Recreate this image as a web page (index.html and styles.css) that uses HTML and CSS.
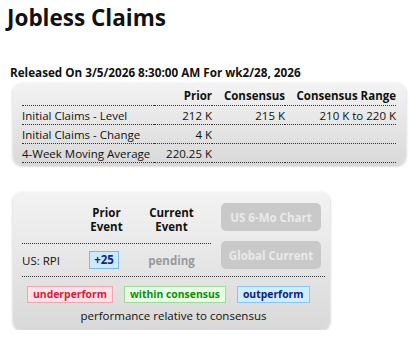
FILE: index.html
```html
<!DOCTYPE html>
<html>
<head>
<meta charset="utf-8">
<link rel="stylesheet" href="styles.css">
</head>
<body>
<h1 class="title">Jobless Claims</h1>
<div class="released">Released On 3/5/2026 8:30:00 AM For wk2/28, 2026</div>
<div class="box data-box">
  <table class="data">
    <thead>
      <tr><th class="lbl"></th><th>Prior</th><th>Consensus</th><th>Consensus Range</th></tr>
    </thead>
    <tbody>
      <tr><td class="lbl">Initial Claims - Level</td><td>212 K</td><td>215 K</td><td>210 K to 220 K</td></tr>
      <tr><td class="lbl">Initial Claims - Change</td><td>4 K</td><td></td><td></td></tr>
      <tr><td class="lbl">4-Week Moving Average</td><td>220.25 K</td><td></td><td></td></tr>
    </tbody>
  </table>
</div>
<div class="box perf-box">
  <div class="perf-top">
    <div class="perf-table">
      <div class="perf-head">
        <div class="ph-lbl"></div>
        <div class="ph-col">Prior<br>Event</div>
        <div class="ph-col">Current<br>Event</div>
      </div>
      <div class="perf-row">
        <div class="ph-lbl">US: RPI</div>
        <div class="ph-col"><span class="badge-blue">+25</span></div>
        <div class="ph-col pending">pending</div>
      </div>
    </div>
    <div class="buttons">
      <div class="btn">US 6-Mo Chart</div>
      <div class="btn">Global Current</div>
    </div>
  </div>
  <div class="legend">
    <span class="tag under">underperform</span>
    <span class="tag within">within consensus</span>
    <span class="tag out">outperform</span>
  </div>
  <div class="caption">performance relative to consensus</div>
</div>
</body>
</html>
```
FILE: styles.css
```css
body {
  margin: 0;
  padding: 0;
  font-family: "Open Sans", "Liberation Sans", sans-serif;
  color: #111;
  background: #fff;
}
.title {
  margin: 0;
  padding: 5px 0 0 7px;
  font-size: 22.5px;
  font-weight: 700;
  line-height: 26px;
}
.released {
  margin: 34px 0 0 10px;
  font-size: 11.7px;
  font-weight: 700;
  line-height: 14px;
}
.box {
  border-radius: 9px;
  background: linear-gradient(#f3f3f3, #d9d9d9);
  box-shadow: 0 1px 3px rgba(0,0,0,0.25);
}
.data-box {
  margin: 4px 0 0 13px;
  width: 393px;
  padding: 4px 0 2px 0;
}
.data {
  border-collapse: separate;
  border-spacing: 0;
  margin-left: 9px;
  font-size: 11.5px;
}
.data th {
  font-weight: 700;
  text-align: right;
  padding: 2px 0 3px 0;
  border-bottom: 1px dotted #333;
  line-height: 13px;
}
.data td {
  text-align: right;
  padding: 3px 0 2px 0;
  border-bottom: 1px dotted #333;
  line-height: 13px;
}
.data .lbl { text-align: left; width: 132px; }
.data th:nth-child(2), .data td:nth-child(2) { width: 58px; }
.data th:nth-child(3), .data td:nth-child(3) { width: 73px; }
.data th:nth-child(4), .data td:nth-child(4) { width: 111px; }

.perf-box {
  margin: 27px 0 0 13px;
  width: 317px;
  padding: 11px 5px 7px 9px;
  box-sizing: border-box;
}
.perf-top {
  display: flex;
  border-bottom: 1px dotted #333;
}
.perf-table { width: 189px; font-size: 11.5px; }
.perf-head {
  display: flex;
  align-items: flex-end;
  border-bottom: 1px dotted #333;
  height: 41px;
  box-sizing: border-box;
  padding-bottom: 9px;
}
.perf-row {
  display: flex;
  align-items: center;
  height: 32px;
}
.ph-lbl { width: 52px; }
.ph-col { width: 65px; text-align: center; }
.perf-row .ph-col:nth-child(2) { padding-right: 5px; box-sizing: border-box; }
.perf-head .ph-col { font-weight: 700; line-height: 14px; }
.badge-blue {
  display: inline-block;
  background: #cde9ff;
  border: 1px solid #7fb7e8;
  color: #0b2a7a;
  font-weight: 700;
  padding: 1px 4px;
  line-height: 14px;
}
.pending { color: #999; font-weight: 700; }
.buttons {
  margin-left: 10px;
  display: flex;
  flex-direction: column;
  gap: 10px;
  padding-bottom: 7px;
}
.btn {
  width: 100px;
  height: 28px;
  border-radius: 5px;
  background: #c9c9c9;
  color: #e9e9e9;
  font-size: 11.5px;
  font-weight: 700;
  display: flex;
  align-items: center;
  justify-content: center;
  white-space: nowrap;
}
.legend {
  display: flex;
  gap: 11px;
  padding: 9px 0 0 5px;
  font-size: 10.4px;
  font-weight: 700;
  white-space: nowrap;
}
.tag {
  padding: 1px 5px;
  line-height: 13px;
  border: 1px solid;
}
.under { background: #ffe1e7; border-color: #f0a6b0; color: #d3203a; }
.within { background: #e6ffe2; border-color: #9cd99a; color: #138a13; }
.out { background: #cfedff; border-color: #86c8f2; color: #0b1e7d; }
.caption {
  text-align: center;
  font-size: 11.5px;
  line-height: 14px;
  padding-top: 6px;
}
```
